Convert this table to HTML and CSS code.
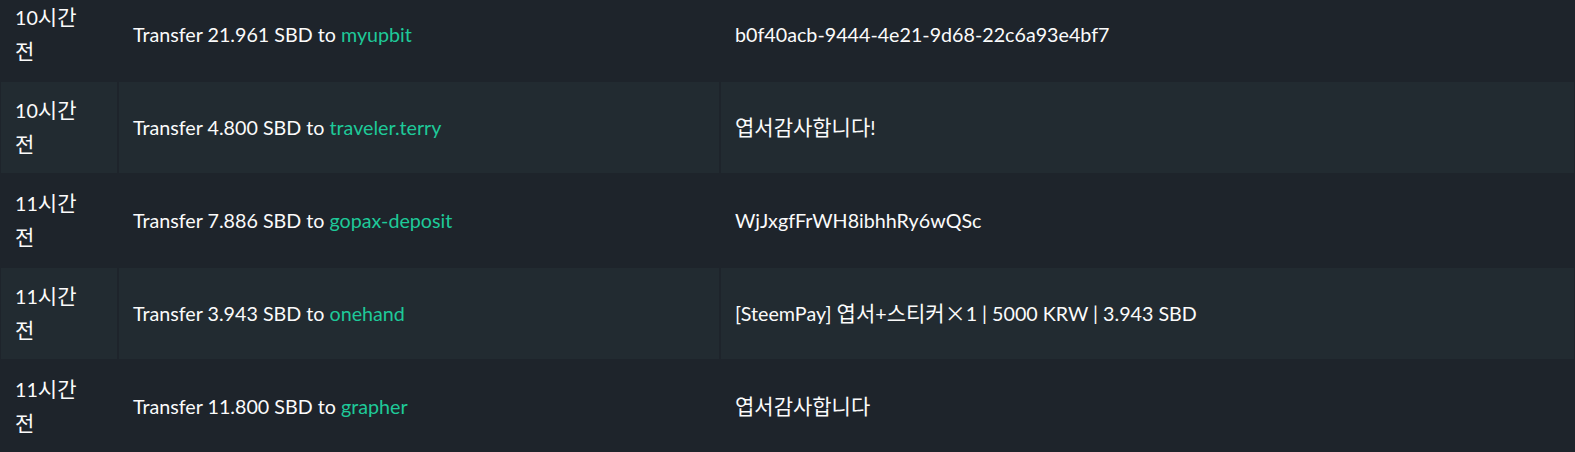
FILE: index.html
```html
<!DOCTYPE html>
<html lang="ko">
<head>
<meta charset="utf-8">
<link rel="stylesheet" href="styles.css">
</head>
<body>
<div class="table">
  <div class="row">
    <div class="cell time"><p class="txt">10<span class="ko">시간</span> <span class="ko">전</span></p></div>
    <div class="cell"><p class="txt">Transfer 21.961 SBD to <a class="link" href="#">myupbit</a></p></div>
    <div class="cell"><p class="txt">b0f40acb-9444-4e21-9d68-22c6a93e4bf7</p></div>
  </div>
  <div class="row alt">
    <div class="cell time"><p class="txt">10<span class="ko">시간</span> <span class="ko">전</span></p></div>
    <div class="cell"><p class="txt">Transfer 4.800 SBD to <a class="link" href="#">traveler.terry</a></p></div>
    <div class="cell"><p class="txt"><span class="ko">엽서감사합니다</span>!</p></div>
  </div>
  <div class="row">
    <div class="cell time"><p class="txt">11<span class="ko">시간</span> <span class="ko">전</span></p></div>
    <div class="cell"><p class="txt">Transfer 7.886 SBD to <a class="link" href="#">gopax-deposit</a></p></div>
    <div class="cell"><p class="txt">WjJxgfFrWH8ibhhRy6wQSc</p></div>
  </div>
  <div class="row alt">
    <div class="cell time"><p class="txt">11<span class="ko">시간</span> <span class="ko">전</span></p></div>
    <div class="cell"><p class="txt">Transfer 3.943 SBD to <a class="link" href="#">onehand</a></p></div>
    <div class="cell"><p class="txt">[SteemPay] <span class="ko">엽서</span>+<span class="ko">스티커×</span>1 | 5000 KRW | 3.943 SBD</p></div>
  </div>
  <div class="row">
    <div class="cell time"><p class="txt">11<span class="ko">시간</span> <span class="ko">전</span></p></div>
    <div class="cell"><p class="txt">Transfer 11.800 SBD to <a class="link" href="#">grapher</a></p></div>
    <div class="cell"><p class="txt"><span class="ko">엽서감사합니다</span></p></div>
  </div>
</div>
</body>
</html>
```
FILE: styles.css
```css
html, body {
  margin: 0;
  padding: 0;
  background: #1e242b;
}

body {
  overflow: hidden;
  color: #fbfbfb;
  font-family: Lato, "Noto Sans CJK KR", sans-serif;
  font-size: 19.7px;
}

.table {
  margin-top: -13.3px;
  display: flex;
  flex-direction: column;
}

.row {
  display: grid;
  grid-template-columns: 118px 602px 1fr;
  height: 95px;
  background: #1e242b;
}

.row.alt {
  height: 91px;
  background: #222b31;
}

.cell {
  display: flex;
  align-items: center;
  padding: 0 14px;
  border-left: 1px solid #1e242b;
  border-right: 1px solid #1e242b;
  line-height: 33px;
  min-width: 0;
}

.cell.time {
  padding-right: 22px;
}

.txt {
  margin: 0;
}

.ko {
  font-family: "Noto Sans CJK KR", sans-serif;
  font-size: 21px;
}

.link {
  color: #1ec999;
  text-decoration: none;
}
```
